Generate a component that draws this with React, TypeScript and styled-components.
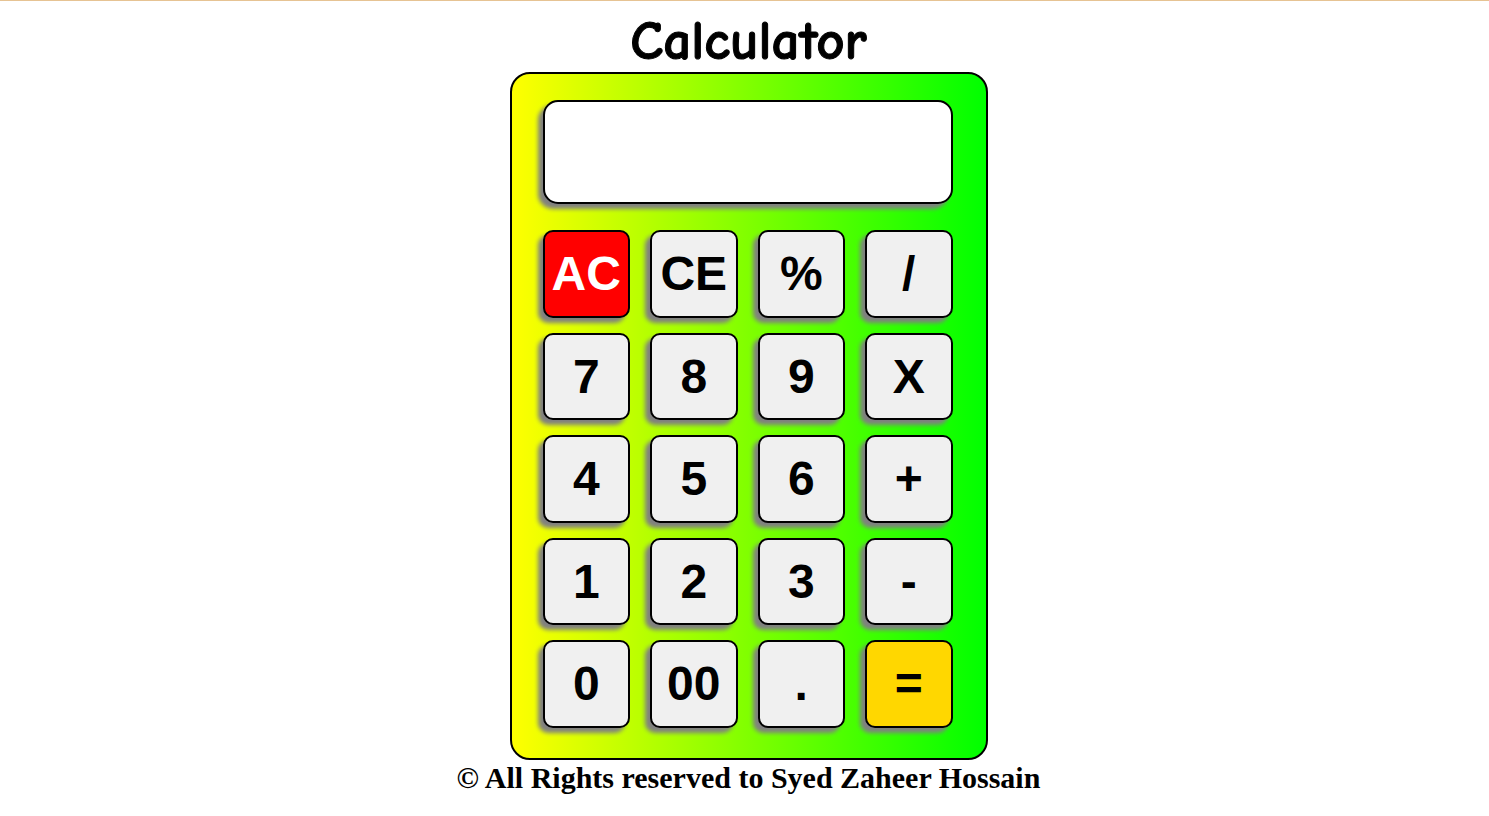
import React from "react";
import styled, { createGlobalStyle } from "styled-components";

const GlobalStyle = createGlobalStyle`
  html, body {
    margin: 0;
    padding: 0;
    background: #ffffff;
  }
  body {
    border-top: 1px solid #e6c393;
  }
`;

const Page = styled.div`
  display: flex;
  flex-direction: column;
  align-items: center;
  padding-left: 8px;
`;

const Title = styled.h1`
  margin: 0;
  height: 71px;
  line-height: 80px;
  font-family: "Comic Sans MS", "Comic Neue", cursive;
  font-size: 55px;
  font-weight: 900;
  color: #000;
  -webkit-text-stroke: 1px #000;
`;

const Calculator = styled.div`
  box-sizing: border-box;
  width: 478px;
  height: 688px;
  padding: 26px 33px 0 31px;
  border: 2px solid #000;
  border-radius: 20px;
  background: linear-gradient(to right, #ffff00, #00ff00);
  display: flex;
  flex-direction: column;
  gap: 26px;
`;

const Display = styled.div`
  box-sizing: border-box;
  width: 410px;
  height: 104px;
  background: #fff;
  border: 2px solid #000;
  border-radius: 15px;
  box-shadow: -5px 5px 4px #808080;
`;

const Keys = styled.div`
  display: grid;
  width: 410px;
  grid-template-columns: repeat(4, 1fr);
  grid-auto-rows: 87.5px;
  column-gap: 20px;
  row-gap: 15px;
`;

type Variant = "plain" | "clear" | "equals";

const Key = styled.button<{ $variant: Variant }>`
  box-sizing: border-box;
  margin: 0;
  padding: 0;
  border: 2px solid #000;
  border-radius: 10px;
  box-shadow: -5px 5px 4px #808080;
  background: ${(p) =>
    p.$variant === "clear" ? "#ff0000" : p.$variant === "equals" ? "#ffd700" : "#f0f0f0"};
  color: ${(p) => (p.$variant === "clear" ? "#ffffff" : "#000000")};
  font-family: "Liberation Sans", Arial, sans-serif;
  font-weight: bold;
  font-size: 48px;
  display: flex;
  align-items: center;
  justify-content: center;
  cursor: pointer;
`;

const Footer = styled.p`
  margin: 0;
  font-family: "Liberation Serif", "Times New Roman", serif;
  font-weight: bold;
  font-size: 30px;
  line-height: 36px;
  color: #000;
`;

const keys: { label: string; variant: Variant }[] = [
  { label: "AC", variant: "clear" },
  { label: "CE", variant: "plain" },
  { label: "%", variant: "plain" },
  { label: "/", variant: "plain" },
  { label: "7", variant: "plain" },
  { label: "8", variant: "plain" },
  { label: "9", variant: "plain" },
  { label: "X", variant: "plain" },
  { label: "4", variant: "plain" },
  { label: "5", variant: "plain" },
  { label: "6", variant: "plain" },
  { label: "+", variant: "plain" },
  { label: "1", variant: "plain" },
  { label: "2", variant: "plain" },
  { label: "3", variant: "plain" },
  { label: "-", variant: "plain" },
  { label: "0", variant: "plain" },
  { label: "00", variant: "plain" },
  { label: ".", variant: "plain" },
  { label: "=", variant: "equals" },
];

export default function App() {
  return (
    <>
      <GlobalStyle />
      <Page>
        <Title>Calculator</Title>
        <Calculator>
          <Display />
          <Keys>
            {keys.map((k) => (
              <Key key={k.label} $variant={k.variant}>
                {k.label}
              </Key>
            ))}
          </Keys>
        </Calculator>
        <Footer>© All Rights reserved to Syed Zaheer Hossain</Footer>
      </Page>
    </>
  );
}
